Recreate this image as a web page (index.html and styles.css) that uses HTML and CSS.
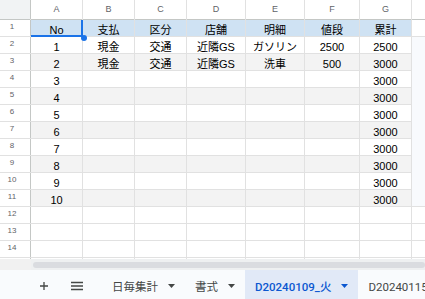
FILE: index.html
```html
<!DOCTYPE html>
<html lang="ja">
<head>
    <meta charset="UTF-8">
    <meta name="viewport" content="width=device-width, initial-scale=1.0">
    <title>家計簿 - D20240109_火</title>
    <link rel="stylesheet" href="styles.css">
</head>
<body>
    <div class="sheet">
        <div class="row head">
            <div class="corner"></div>
            <div class="hd">A</div><div class="hd">B</div><div class="hd">C</div><div class="hd">D</div>
            <div class="hd">E</div><div class="hd">F</div><div class="hd">G</div><div class="hd"></div>
        </div>
        <div class="row">
            <div class="rn">1</div>
            <div class="c th sel">No</div><div class="c th">支払</div><div class="c th">区分</div><div class="c th">店舗</div>
            <div class="c th">明細</div><div class="c th">値段</div><div class="c th">累計</div><div class="c"></div>
        </div>
        <div class="row">
            <div class="rn">2</div>
            <div class="c">1</div><div class="c">現金</div><div class="c">交通</div><div class="c">近隣GS</div>
            <div class="c">ガソリン</div><div class="c">2500</div><div class="c">2500</div><div class="c out"></div>
        </div>
        <div class="row band">
            <div class="rn">3</div>
            <div class="c">2</div><div class="c">現金</div><div class="c">交通</div><div class="c">近隣GS</div>
            <div class="c">洗車</div><div class="c">500</div><div class="c">3000</div><div class="c out"></div>
        </div>
        <div class="row">
            <div class="rn">4</div>
            <div class="c">3</div><div class="c"></div><div class="c"></div><div class="c"></div>
            <div class="c"></div><div class="c"></div><div class="c">3000</div><div class="c out"></div>
        </div>
        <div class="row band">
            <div class="rn">5</div>
            <div class="c">4</div><div class="c"></div><div class="c"></div><div class="c"></div>
            <div class="c"></div><div class="c"></div><div class="c">3000</div><div class="c out"></div>
        </div>
        <div class="row">
            <div class="rn">6</div>
            <div class="c">5</div><div class="c"></div><div class="c"></div><div class="c"></div>
            <div class="c"></div><div class="c"></div><div class="c">3000</div><div class="c out"></div>
        </div>
        <div class="row band">
            <div class="rn">7</div>
            <div class="c">6</div><div class="c"></div><div class="c"></div><div class="c"></div>
            <div class="c"></div><div class="c"></div><div class="c">3000</div><div class="c out"></div>
        </div>
        <div class="row">
            <div class="rn">8</div>
            <div class="c">7</div><div class="c"></div><div class="c"></div><div class="c"></div>
            <div class="c"></div><div class="c"></div><div class="c">3000</div><div class="c out"></div>
        </div>
        <div class="row band">
            <div class="rn">9</div>
            <div class="c">8</div><div class="c"></div><div class="c"></div><div class="c"></div>
            <div class="c"></div><div class="c"></div><div class="c">3000</div><div class="c out"></div>
        </div>
        <div class="row">
            <div class="rn">10</div>
            <div class="c">9</div><div class="c"></div><div class="c"></div><div class="c"></div>
            <div class="c"></div><div class="c"></div><div class="c">3000</div><div class="c out"></div>
        </div>
        <div class="row band">
            <div class="rn">11</div>
            <div class="c">10</div><div class="c"></div><div class="c"></div><div class="c"></div>
            <div class="c"></div><div class="c"></div><div class="c">3000</div><div class="c out last"></div>
        </div>
        <div class="row">
            <div class="rn">12</div>
            <div class="c"></div><div class="c"></div><div class="c"></div><div class="c"></div>
            <div class="c"></div><div class="c"></div><div class="c"></div><div class="c"></div>
        </div>
        <div class="row">
            <div class="rn">13</div>
            <div class="c"></div><div class="c"></div><div class="c"></div><div class="c"></div>
            <div class="c"></div><div class="c"></div><div class="c"></div><div class="c"></div>
        </div>
        <div class="row">
            <div class="rn">14</div>
            <div class="c"></div><div class="c"></div><div class="c"></div><div class="c"></div>
            <div class="c"></div><div class="c"></div><div class="c"></div><div class="c"></div>
        </div>
        <div class="row">
            <div class="rn"></div>
            <div class="c"></div><div class="c"></div><div class="c"></div><div class="c"></div>
            <div class="c"></div><div class="c"></div><div class="c"></div><div class="c"></div>
        </div>
    </div>

    <div class="scroll">
        <div class="scroll-corner"></div>
        <div class="thumb"></div>
    </div>

    <div class="tabs">
        <div class="btn">
            <svg width="10" height="10" viewBox="0 0 10 10"><path d="M5 1v8M1 5h8" stroke="#444746" stroke-width="1.3" fill="none"/></svg>
        </div>
        <div class="btn">
            <svg width="12" height="10" viewBox="0 0 12 10"><path d="M0 1.5h12M0 5h12M0 8.5h12" stroke="#444746" stroke-width="1.3" fill="none"/></svg>
        </div>
        <div class="tab first">
            <span>日毎集計</span>
            <svg class="caret" width="7" height="4" viewBox="0 0 7 4"><path d="M0 0h7L3.5 4z"/></svg>
        </div>
        <div class="tab">
            <span>書式</span>
            <svg class="caret" width="7" height="4" viewBox="0 0 7 4"><path d="M0 0h7L3.5 4z"/></svg>
        </div>
        <div class="tab active">
            <span>D20240109_火</span>
            <svg class="caret" width="7" height="4" viewBox="0 0 7 4"><path d="M0 0h7L3.5 4z"/></svg>
        </div>
        <div class="tab">
            <span>D20240115_月</span>
        </div>
    </div>
</body>
</html>
```

FILE: styles.css
```css
body {
    margin: 0;
    width: 425px;
    height: 299px;
    overflow: hidden;
    background: #fff;
    font-family: "Liberation Sans", Arial, "Noto Sans CJK JP", sans-serif;
}
.sheet {
    display: grid;
    align-content: start;
    row-gap: 1px;
    height: 259px;
    overflow: hidden;
    background: #e1e1e1;
}
.row {
    display: grid;
    grid-template-columns: 30px 51px 51px 51px 58px 58px 54px 51px 1fr;
    column-gap: 1px;
    height: 16px;
}
.row.head {
    height: 19px;
}
.corner {
    background: #f1f3f4;
    box-shadow: 1px 0 0 #c4c7c5, 0 1px 0 #c4c7c5;
}
.hd {
    background: #fff;
    color: #5f6368;
    font-size: 9px;
    line-height: 19px;
    text-align: center;
    box-shadow: 0 1px 0 #c4c7c5;
}
.rn {
    background: #fff;
    color: #5f6368;
    font-size: 8px;
    line-height: 14px;
    text-align: center;
    padding-right: 6px;
    box-shadow: 1px 0 0 #c4c7c5;
}
.c {
    background: #fff;
    color: #000;
    font-size: 11px;
    line-height: 12px;
    padding-top: 4px;
    box-sizing: border-box;
    text-align: center;
    white-space: nowrap;
    overflow: hidden;
}
.c.th {
    background: #cfe2f3;
}
.band .c {
    background: #f3f3f3;
}
.c.out,
.band .c.out {
    background: #f8fafd;
    box-shadow: 0 1px 0 #f8fafd;
}
.c.out.last {
    box-shadow: none;
}
.c.sel {
    position: relative;
    overflow: visible;
}
.c.sel::after {
    content: "";
    position: absolute;
    left: 0;
    top: 0;
    right: -1px;
    bottom: -1px;
    border-right: 2px solid #1a73e8;
    border-bottom: 2px solid #1a73e8;
}
.c.sel::before {
    content: "";
    position: absolute;
    right: -5px;
    bottom: -5px;
    width: 6px;
    height: 6px;
    border-radius: 50%;
    background: #1a73e8;
    z-index: 1;
}
.scroll {
    display: flex;
    height: 11px;
    background: #eef0f1;
}
.scroll-corner {
    width: 31px;
    background: #f1f1f1;
}
.thumb {
    flex: 1;
    margin: 3px 0 2px 2px;
    background: #dadce0;
    border-radius: 3px;
}
.tabs {
    display: flex;
    height: 29px;
    overflow: hidden;
    background: #f9fbfd;
    font-family: Roboto, "Noto Sans CJK JP", sans-serif;
    font-size: 11.5px;
    color: #444746;
    white-space: nowrap;
}
.tabs > div {
    flex-shrink: 0;
}
.btn {
    display: flex;
    align-items: center;
    justify-content: center;
    width: 33px;
    padding-top: 3px;
}
.btn:first-child {
    margin-left: 27px;
}
.tab {
    display: flex;
    align-items: center;
    gap: 10px;
    padding: 3px 10px 0;
}
.tab.first {
    margin-left: 9px;
}
.caret {
    fill: #444746;
}
.tab.active {
    background: #e1e9f7;
    color: #0b57d0;
    font-weight: 500;
}
.tab.active .caret {
    fill: #0b57d0;
}
```
